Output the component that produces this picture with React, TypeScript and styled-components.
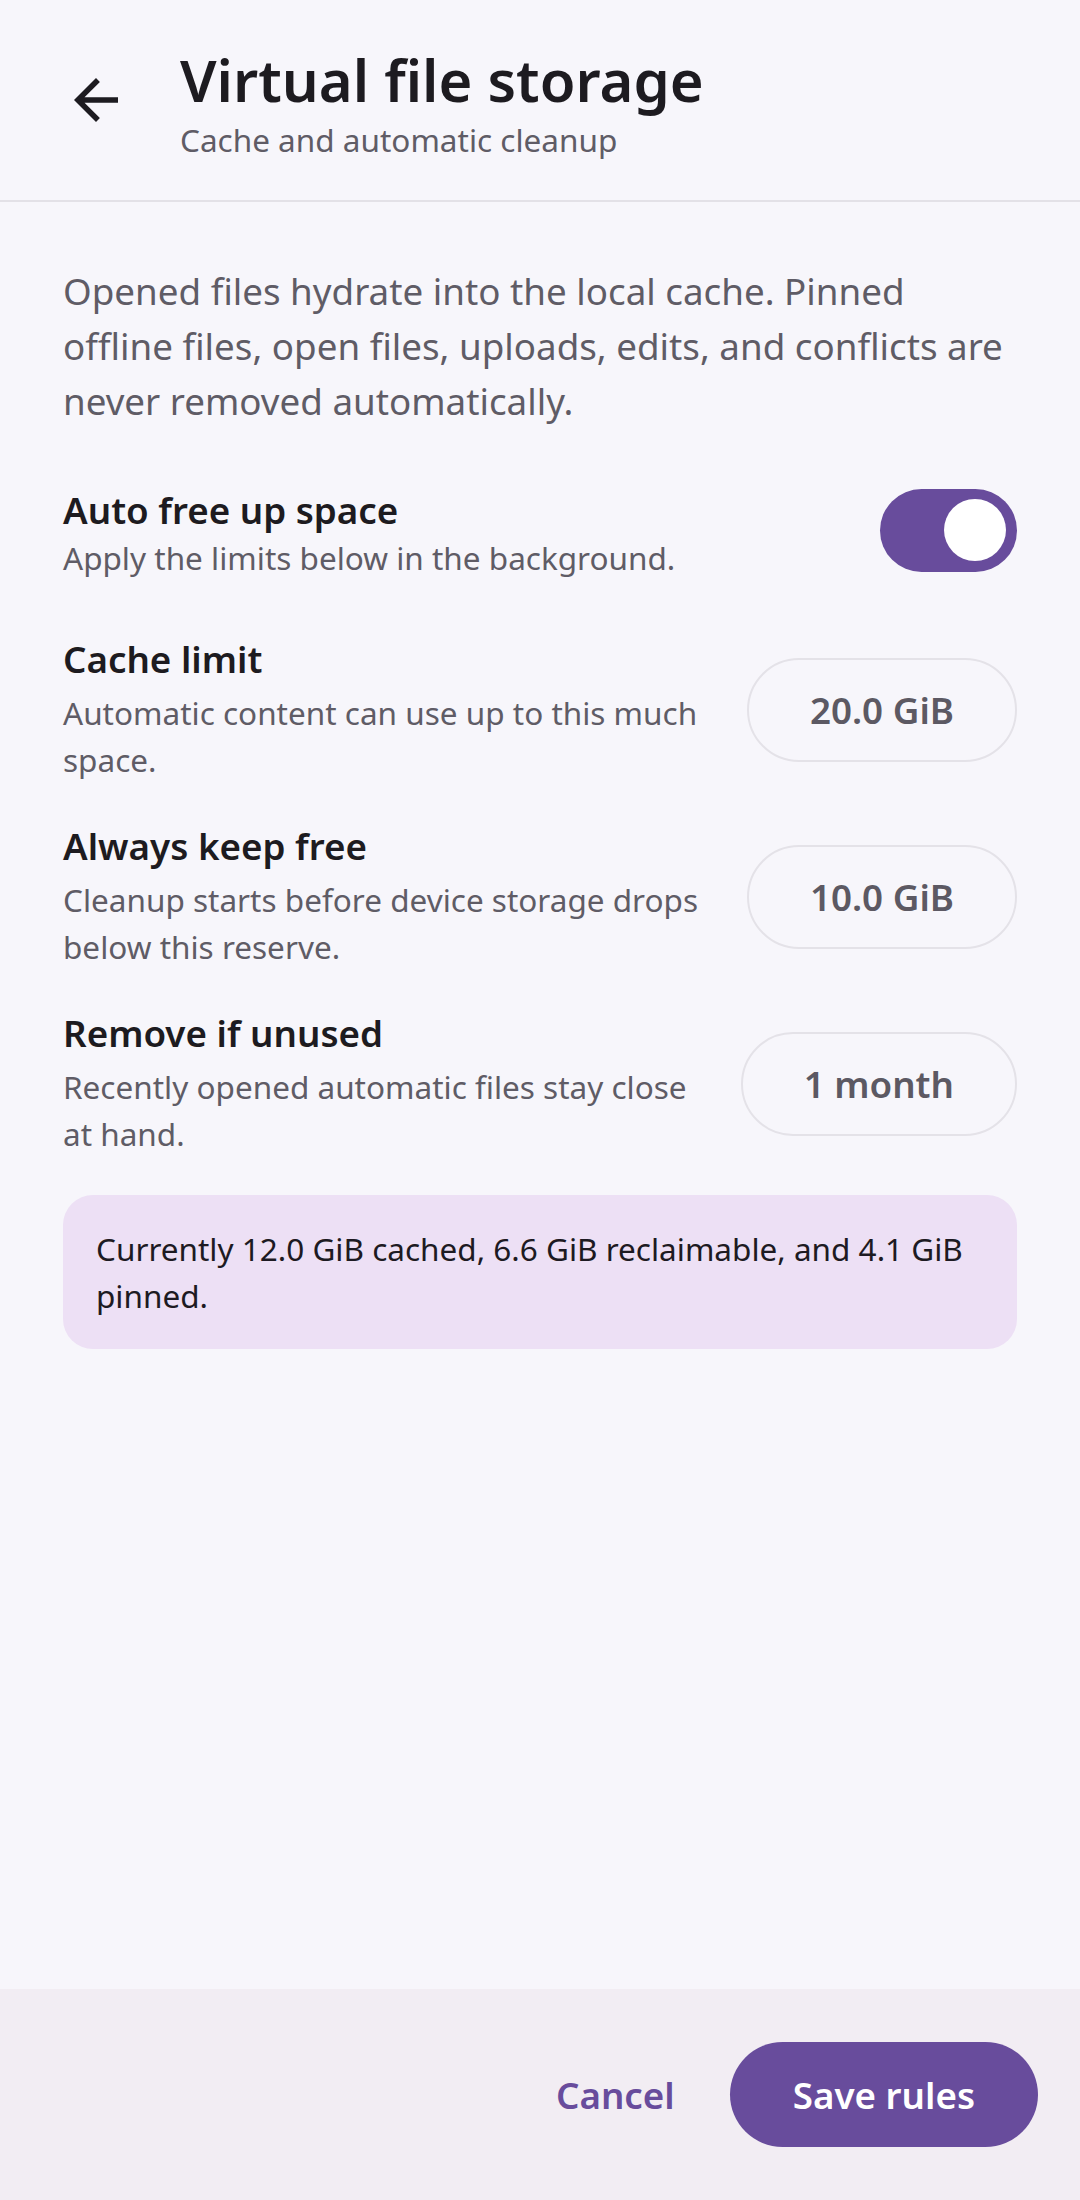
import styled, { createGlobalStyle } from 'styled-components'

const GlobalStyle = createGlobalStyle`
  html, body {
    margin: 0;
    padding: 0;
    background: #f7f6fb;
  }
  body {
    font-family: "Noto Sans", "Open Sans", sans-serif;
    color: #1d1b20;
  }
`

const limits = [
  {
    title: 'Cache limit',
    caption: 'Automatic content can use up to this much space.',
    value: '20.0 GiB',
  },
  {
    title: 'Always keep free',
    caption: 'Cleanup starts before device storage drops below this reserve.',
    value: '10.0 GiB',
  },
  {
    title: 'Remove if unused',
    caption: 'Recently opened automatic files stay close at hand.',
    value: '1 month',
  },
]

const BackArrow = () => (
  <svg viewBox="0 0 24 24" width="66" height="66" aria-hidden="true">
    <path
      fill="#1d1b20"
      d="M20 11H7.83l5.59-5.59L12 4l-8 8 8 8 1.41-1.41L7.83 13H20v-2z"
    />
  </svg>
)

export default function App() {
  return (
    <>
      <GlobalStyle />
      <Screen>
        <Header>
          <BackButton type="button" aria-label="Back">
            <BackArrow />
          </BackButton>
          <Titles>
            <Title>Virtual file storage</Title>
            <Subtitle>Cache and automatic cleanup</Subtitle>
          </Titles>
        </Header>

        <Content>
          <Intro>
            Opened files hydrate into the local cache. Pinned offline files, open files,
            uploads, edits, and conflicts are never removed automatically.
          </Intro>

          <SwitchRow>
            <RowText>
              <RowTitle>Auto free up space</RowTitle>
              <RowCaption>Apply the limits below in the background.</RowCaption>
            </RowText>
            <Switch role="switch" aria-checked="true">
              <Thumb />
            </Switch>
          </SwitchRow>

          <LimitList>
            {limits.map((item) => (
              <LimitRow key={item.title}>
                <RowText>
                  <RowTitle>{item.title}</RowTitle>
                  <RowCaption $spaced>{item.caption}</RowCaption>
                </RowText>
                <ValuePill type="button">{item.value}</ValuePill>
              </LimitRow>
            ))}

            <InfoBox>
              Currently 12.0 GiB cached, 6.6 GiB reclaimable, and 4.1 GiB pinned.
            </InfoBox>
          </LimitList>
        </Content>

        <Footer>
          <TextButton type="button">Cancel</TextButton>
          <FilledButton type="button">Save rules</FilledButton>
        </Footer>
      </Screen>
    </>
  )
}

const Screen = styled.div`
  display: flex;
  flex-direction: column;
  height: 100vh;
  background: #f7f6fb;
`

const Header = styled.header`
  display: flex;
  align-items: flex-start;
  gap: 51px;
  height: 202px;
  box-sizing: border-box;
  padding: 45px 63px 0;
  border-bottom: 2.5px solid #e3e1e7;
  flex-shrink: 0;
`

const BackButton = styled.button`
  display: flex;
  align-items: center;
  justify-content: center;
  width: 66px;
  height: 66px;
  margin-top: 22px;
  padding: 0;
  border: none;
  background: none;
`

const Titles = styled.div`
  display: flex;
  flex-direction: column;
`

const Title = styled.h1`
  margin: 0;
  font-size: 58px;
  font-weight: 600;
  line-height: 70px;
  color: #1d1b20;
`

const Subtitle = styled.span`
  margin-top: 4px;
  font-size: 31.5px;
  line-height: 42px;
  color: #5f5c66;
`

const Content = styled.main`
  flex: 1;
  display: flex;
  flex-direction: column;
  padding: 62px 63px 0;
`

const Intro = styled.p`
  margin: 0 0 58px;
  font-size: 36.75px;
  line-height: 55px;
  color: #5f5c66;
`

const SwitchRow = styled.div`
  display: flex;
  align-items: center;
  justify-content: space-between;
  gap: 40px;
`

const RowText = styled.div`
  display: flex;
  flex-direction: column;
  flex: 1;
  min-width: 0;
`

const RowTitle = styled.span`
  font-size: 36.75px;
  font-weight: 600;
  line-height: 47px;
  color: #1d1b20;
`

const RowCaption = styled.span<{ $spaced?: boolean }>`
  margin-top: ${(p) => (p.$spaced ? '6px' : '0')};
  font-size: 31.5px;
  line-height: 47px;
  color: #5f5c66;
`

const Switch = styled.div`
  display: flex;
  align-items: center;
  justify-content: flex-end;
  width: 137px;
  height: 83px;
  box-sizing: border-box;
  margin-bottom: 8px;
  padding-right: 11px;
  border-radius: 42px;
  background: #684c9c;
  flex-shrink: 0;
`

const Thumb = styled.span`
  width: 62px;
  height: 62px;
  border-radius: 50%;
  background: #ffffff;
`

const LimitList = styled.div`
  display: flex;
  flex-direction: column;
  gap: 40px;
  margin-top: 55px;
`

const LimitRow = styled.div`
  display: flex;
  align-items: center;
  gap: 30px;
`

const ValuePill = styled.button`
  height: 104px;
  padding: 0 61px;
  border: 2.5px solid #e4e2e8;
  border-radius: 52px;
  background: transparent;
  font-family: "Noto Sans", "Open Sans", sans-serif;
  font-size: 36.75px;
  font-weight: 600;
  color: #5c5963;
  white-space: nowrap;
  flex-shrink: 0;
`

const InfoBox = styled.div`
  margin-top: -2px;
  padding: 30px 33px;
  border-radius: 30px;
  background: #ede0f5;
  font-size: 31.5px;
  line-height: 47px;
  color: #1d1a22;
`

const Footer = styled.footer`
  display: flex;
  align-items: center;
  justify-content: flex-end;
  gap: 24px;
  height: 211px;
  box-sizing: border-box;
  padding: 0 42px;
  background: #f2edf3;
  flex-shrink: 0;
`

const TextButton = styled.button`
  height: 105px;
  padding: 0 31px;
  border: none;
  background: none;
  font-family: "Noto Sans", "Open Sans", sans-serif;
  font-size: 36.75px;
  font-weight: 600;
  color: #684c9c;
`

const FilledButton = styled.button`
  height: 105px;
  padding: 0 63px;
  border: none;
  border-radius: 53px;
  background: #684c9c;
  font-family: "Noto Sans", "Open Sans", sans-serif;
  font-size: 36.75px;
  font-weight: 600;
  color: #ffffff;
`
